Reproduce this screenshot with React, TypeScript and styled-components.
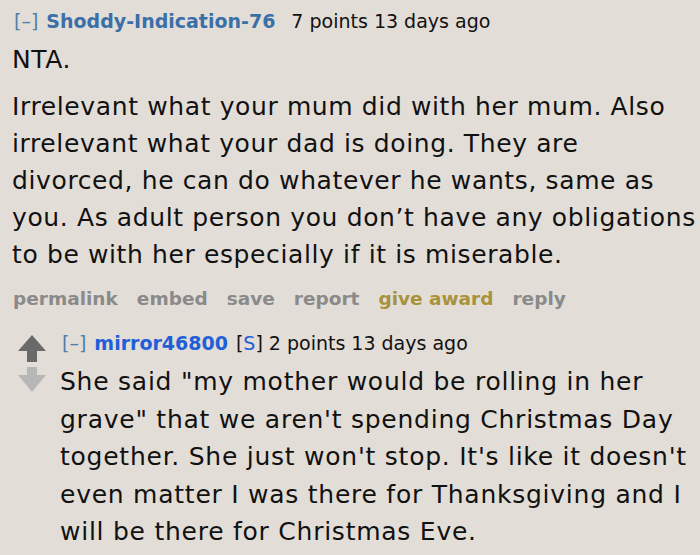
import styled, { createGlobalStyle } from "styled-components";

const GlobalStyle = createGlobalStyle`
    html, body {
        margin: 0;
        padding: 0;
        background: #e3ddd7;
    }
    body {
        font-family: "DejaVu Sans", Verdana, sans-serif;
        color: #111;
    }
`;

const Page = styled.div`
    width: 700px;
    height: 555px;
    overflow: hidden;
    background: #e3ddd7;
    padding: 8px 0 0 12px;
    box-sizing: border-box;
`;

const Tagline = styled.div`
    display: flex;
    align-items: baseline;
    font-size: 19px;
    line-height: 26px;
    white-space: nowrap;
`;

const Expand = styled.span`
    color: #4f7fad;
    margin-left: 2px;
    margin-right: 8px;
`;

type AuthorProps = {
    bright?: boolean;
};

const Author = styled.span<AuthorProps>`
    font-weight: bold;
    color: ${props => props.bright ? '#1f5fd8' : '#3b6fa8'};
    margin-right: ${props => props.bright ? '8px' : '16px'};
`;

const Flair = styled.span`
    color: #111;
    margin-right: 6px;
    & b {
        font-weight: normal;
        color: #1f5fd8;
    }
`;

const Score = styled.span`
    color: #111;
`;

type BodyProps = {
    reply?: boolean;
};

const Body = styled.div<BodyProps>`
    font-size: 25px;
    letter-spacing: ${props => props.reply ? '0.75px' : '0.62px'};
    line-height: ${props => props.reply ? '37.5px' : '37px'};
    color: #111;
    white-space: nowrap;
    margin-top: 7px;
    & p {
        margin: 0 0 10px 0;
    }
    & p:last-child {
        margin-bottom: 0;
    }
`;

const Actions = styled.ul`
    display: flex;
    gap: 19px;
    list-style: none;
    margin: 14px 0 0 1px;
    padding: 0;
    font-size: 18.5px;
    font-weight: bold;
    line-height: 24px;
`;

type ActionProps = {
    gold?: boolean;
};

const Action = styled.li<ActionProps>`
    color: ${props => props.gold ? '#a8923c' : '#8a8a8a'};
`;

const Child = styled.div`
    display: flex;
    margin-top: 19px;
    margin-left: 6px;
`;

const Votes = styled.div`
    display: flex;
    flex-direction: column;
    align-items: center;
    gap: 5px;
    width: 28px;
    margin-top: 5px;
    margin-right: 14px;
`;

const ChildContent = styled.div`
    display: flex;
    flex-direction: column;
`;

const Arrow = ({ down }: { down?: boolean }) => (
    down ? (
        <svg width="28" height="25" viewBox="0 0 28 25">
            <path d="M9 0 H19 V8 H28 L14 25 L0 8 H9 Z" fill="#b7b7b7" />
        </svg>
    ) : (
        <svg width="28" height="27" viewBox="0 0 28 27">
            <path d="M14 0 L28 16 H19 V27 H9 V16 H0 Z" fill="#6a6a6a" />
        </svg>
    )
);

export default function App() {
    return <>
        <GlobalStyle />
        <Page>
            <Tagline>
                <Expand>[–]</Expand>
                <Author>Shoddy-Indication-76</Author>
                <Score>7 points 13 days ago</Score>
            </Tagline>
            <Body>
                <p>NTA.</p>
                <p>
                    Irrelevant what your mum did with her mum. Also<br />
                    irrelevant what your dad is doing. They are<br />
                    divorced, he can do whatever he wants, same as<br />
                    you. As adult person you don’t have any obligations<br />
                    to be with her especially if it is miserable.
                </p>
            </Body>
            <Actions>
                <Action>permalink</Action>
                <Action>embed</Action>
                <Action>save</Action>
                <Action>report</Action>
                <Action gold>give award</Action>
                <Action>reply</Action>
            </Actions>
            <Child>
                <Votes>
                    <Arrow />
                    <Arrow down />
                </Votes>
                <ChildContent>
                    <Tagline>
                        <Expand>[–]</Expand>
                        <Author bright>mirror46800</Author>
                        <Flair>[<b>S</b>]</Flair>
                        <Score>2 points 13 days ago</Score>
                    </Tagline>
                    <Body reply>
                        She said "my mother would be rolling in her<br />
                        grave" that we aren't spending Christmas Day<br />
                        together. She just won't stop. It's like it doesn't<br />
                        even matter I was there for Thanksgiving and I<br />
                        will be there for Christmas Eve.
                    </Body>
                </ChildContent>
            </Child>
        </Page>
    </>;
}
